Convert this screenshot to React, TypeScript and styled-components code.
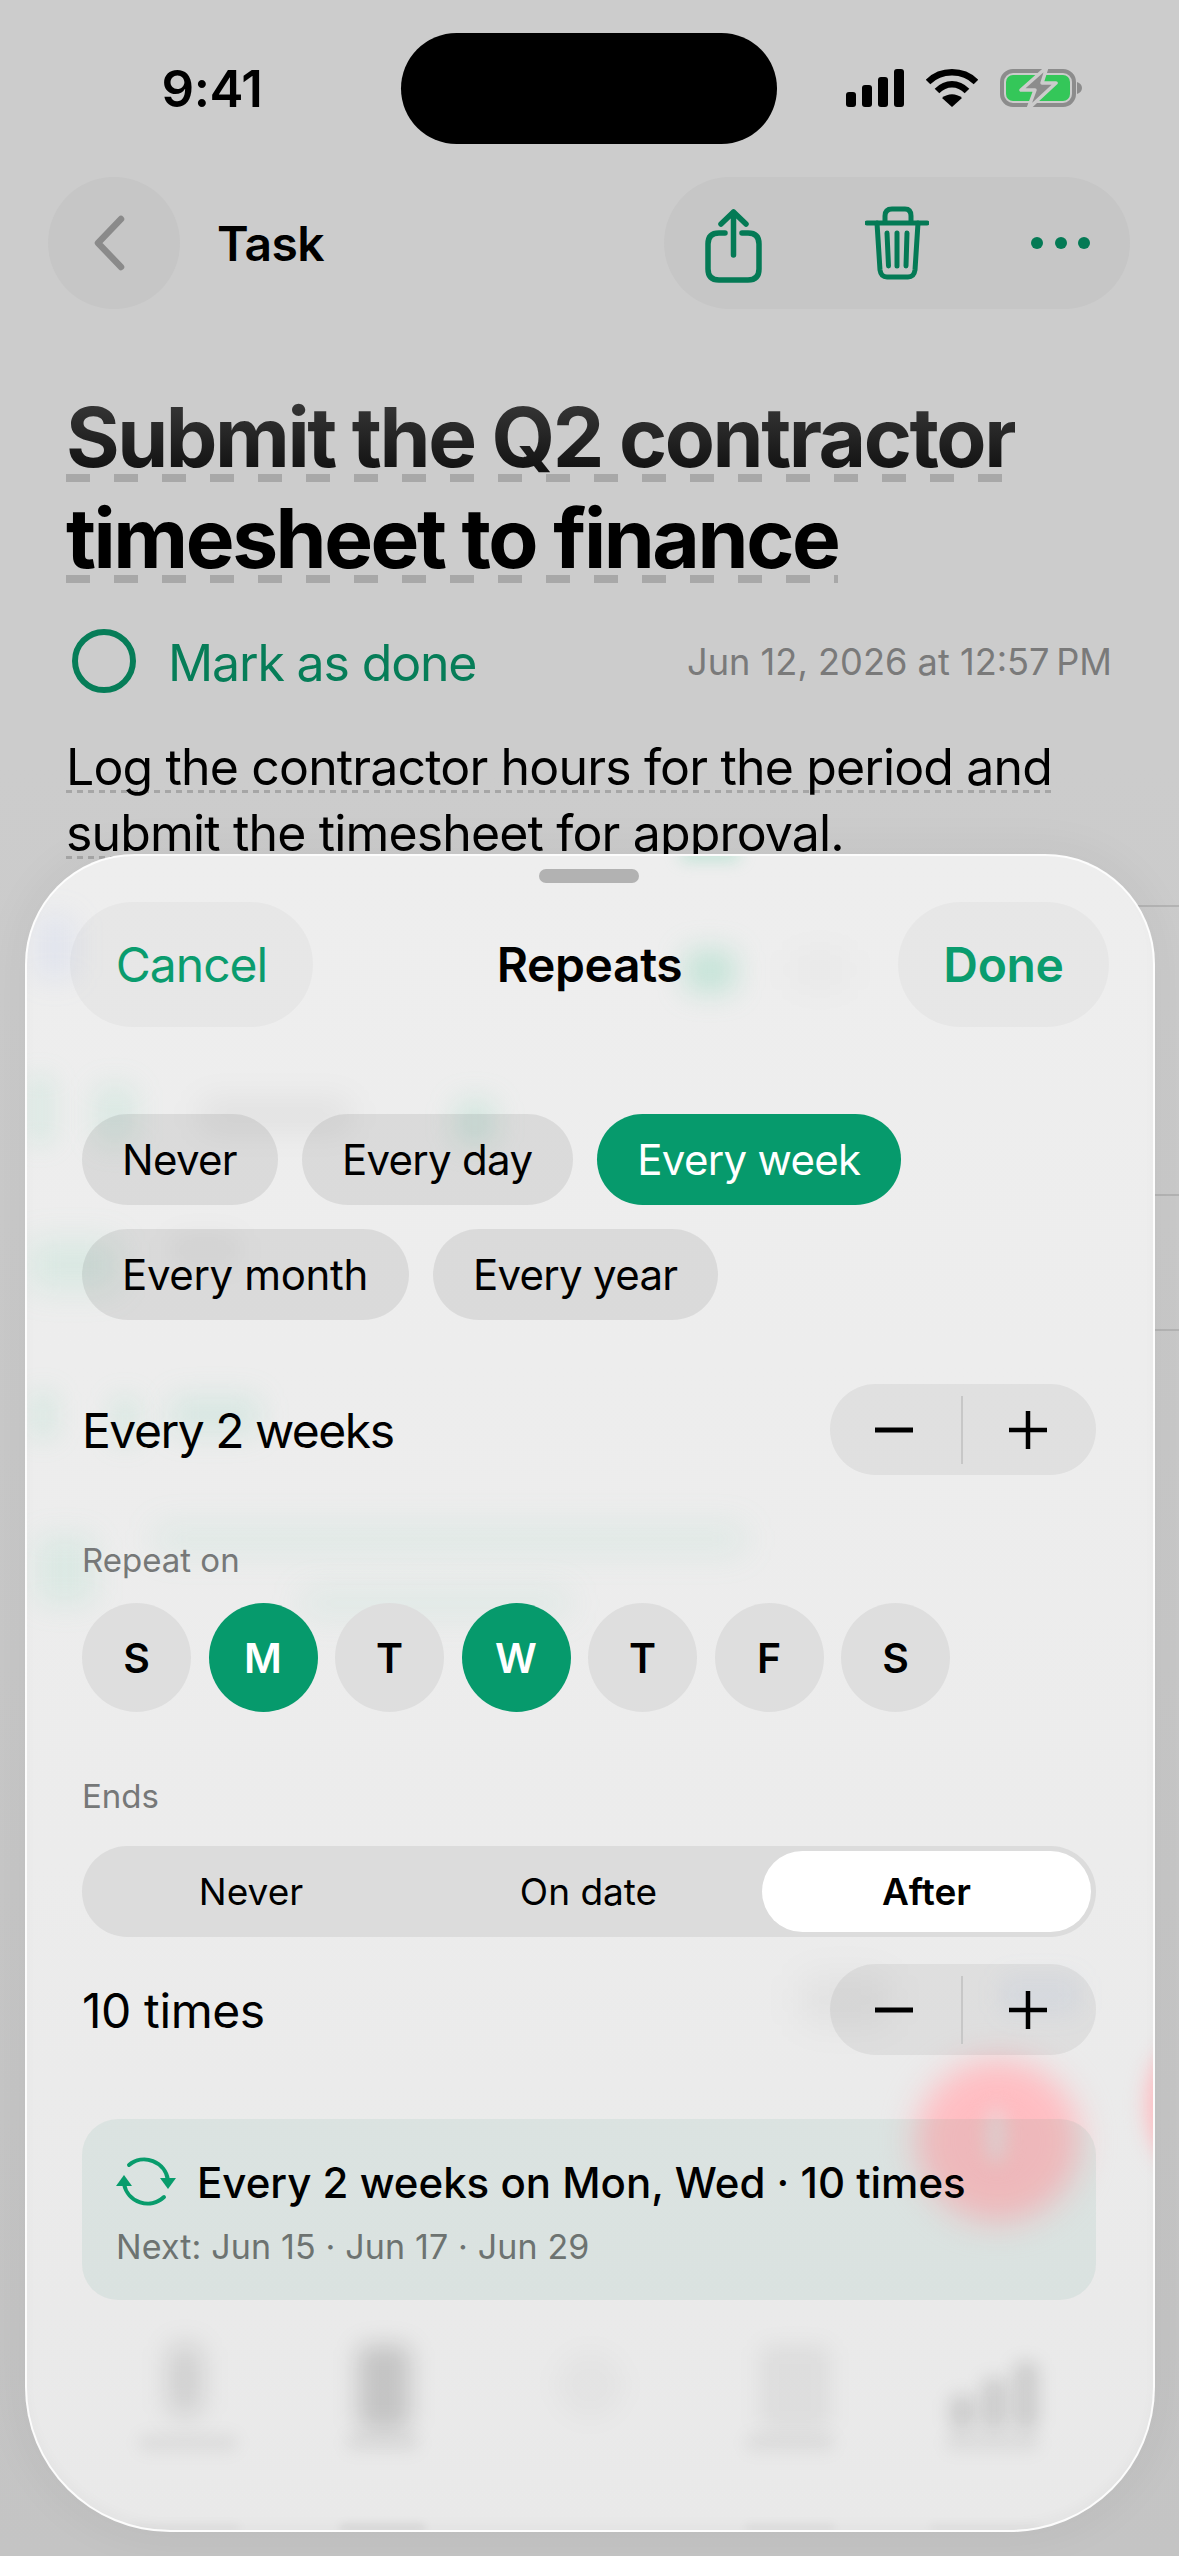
import React from "react";
import styled, { createGlobalStyle } from "styled-components";

const Global = createGlobalStyle`
  html, body { margin: 0; padding: 0; background: #cccccc; }
  * { box-sizing: border-box; }
`;

const Page = styled.div`
  position: relative;
  width: 1179px;
  height: 2556px;
  overflow: hidden;
  background: linear-gradient(#cccccc 0, #cccccc 30%, #c4c4c4 100%);
  font-family: Inter, "Liberation Sans", sans-serif;
  color: #000;
`;

const StatusBar = styled.div`
  display: flex;
  align-items: center;
  height: 111px;
  margin-top: 33px;
`;
const Clock = styled.div`
  width: 401px;
  padding-left: 23px;
  text-align: center;
  font-size: 51px;
  font-weight: 600;
  letter-spacing: -0.5px;
`;
const Island = styled.div`
  width: 376px;
  height: 111px;
  border-radius: 56px;
  background: #000;
`;
const StatusIcons = styled.div`
  display: flex;
  align-items: center;
  margin-left: 69px;
  margin-top: -1px;
  gap: 22px;
`;

const Nav = styled.div`
  display: flex;
  align-items: center;
  height: 132px;
  margin-top: 33px;
  padding: 0 49px 0 48px;
`;
const BackButton = styled.div`
  width: 132px;
  height: 132px;
  border-radius: 50%;
  background: #c6c6c6;
  display: flex;
  align-items: center;
  justify-content: center;
  padding-right: 10px;
`;
const NavTitle = styled.div`
  margin-left: 37px;
  font-size: 48px;
  font-weight: 600;
  letter-spacing: -0.6px;
`;
const Actions = styled.div`
  margin-left: auto;
  width: 466px;
  height: 132px;
  border-radius: 66px;
  background: #c6c6c6;
  display: flex;
  align-items: center;
  padding: 0 39px 0 41px;
  justify-content: space-between;
`;
const ShareSlot = styled.div`
  display: flex;
  margin-top: 5px;
`;

const Content = styled.div`
  padding: 0 66px;
`;
const Title = styled.h1`
  margin: 78px 0 0;
  font-size: 82px;
  line-height: 101px;
  font-weight: 700;
  letter-spacing: -2.45px;
`;
const TitleDash = styled.span`
  background-image: linear-gradient(90deg, #a8a8a8 24px, transparent 24px);
  background-size: 48px 8px;
  background-repeat: repeat-x;
  background-position: 0 calc(100% - 5px);
  -webkit-box-decoration-break: clone;
  box-decoration-break: clone;
`;
const TitleFade = styled.span`
  background-image: linear-gradient(#3a3a3a 395px, #000 505px);
  background-attachment: fixed;
  -webkit-background-clip: text;
  background-clip: text;
  color: transparent;
`;
const MarkRow = styled.div`
  display: flex;
  align-items: center;
  height: 64px;
  margin-top: 40px;
  padding-left: 6px;
`;
const MarkCircle = styled.div`
  width: 64px;
  height: 64px;
  border-radius: 50%;
  border: 6px solid #067d58;
`;
const MarkText = styled.div`
  margin-left: 32px;
  padding-top: 3px;
  font-size: 50px;
  letter-spacing: -1.15px;
  color: #067d58;
`;
const DateText = styled.div`
  margin-left: auto;
  margin-right: 1px;
  padding-top: 1px;
  font-size: 36.2px;
  color: #7a7a7a;
`;
const Description = styled.p`
  margin: 41px 0 0;
  font-size: 50px;
  letter-spacing: -0.85px;
  line-height: 66px;
`;
const DescDash = styled.span`
  background-image: linear-gradient(90deg, #a6a6a6 6px, transparent 6px);
  background-size: 11px 3px;
  background-repeat: repeat-x;
  background-position: 0 calc(100% - 4px);
  -webkit-box-decoration-break: clone;
  box-decoration-break: clone;
`;
const BackList = styled.div`
  margin: 39px 0 0 100px;
`;
const BackRow = styled.div<{ $h: number }>`
  height: ${(p) => p.$h}px;
  border-top: 2px solid #b4b4b4;
`;

/* ---------- sheet ---------- */
const Sheet = styled.div`
  position: absolute;
  left: 25px;
  top: 854px;
  width: 1130px;
  height: 1678px;
  border-radius: 110px 110px 145px 145px;
  background: linear-gradient(#eeeeee, #ececec 60%, #e9e9e9);
  border: 2px solid rgba(255, 255, 255, 0.85);
  box-shadow: 0 0 50px rgba(0, 0, 0, 0.06), inset 0 -7px 12px rgba(0, 0, 0, 0.025);
  overflow: hidden;
  padding: 0 57px 0 55px;
`;
const Smudges = styled.div`
  position: absolute;
  inset: 0;
`;
const Smudge = styled.div<{
  $x: number;
  $y: number;
  $w: number;
  $h: number;
  $c: string;
  $b: number;
  $round?: boolean;
}>`
  position: absolute;
  left: ${(p) => p.$x - 27}px;
  top: ${(p) => p.$y - 856}px;
  width: ${(p) => p.$w}px;
  height: ${(p) => p.$h}px;
  background: ${(p) => p.$c};
  filter: blur(${(p) => p.$b}px);
  border-radius: ${(p) => (p.$round ? "50%" : "8px")};
`;
const SheetBody = styled.div`
  position: relative;
`;
const Handle = styled.div`
  width: 100px;
  height: 14px;
  margin: 13px auto 0;
  border-radius: 7px;
  background: #b2b2b2;
`;
const SheetHeader = styled.div`
  display: grid;
  grid-template-columns: 1fr auto 1fr;
  align-items: center;
  height: 125px;
  margin: 19px -13px 0 -12px;
`;
const HeaderButton = styled.div<{ $w: number; $bold?: boolean }>`
  justify-self: ${(p) => (p.$bold ? "end" : "start")};
  width: ${(p) => p.$w}px;
  height: 125px;
  border-radius: 62px;
  background: rgba(0, 0, 0, 0.028);
  display: flex;
  align-items: center;
  justify-content: center;
  font-size: 48px;
  letter-spacing: ${(p) => (p.$bold ? "-0.3px" : "-1px")};
  font-weight: ${(p) => (p.$bold ? 600 : 400)};
  color: #0a9c6e;
`;
const SheetTitle = styled.div`
  font-size: 48px;
  font-weight: 600;
  letter-spacing: -0.4px;
`;
const Chips = styled.div`
  display: flex;
  flex-wrap: wrap;
  gap: 24px;
  margin-top: 87px;
  width: 900px;
`;
const Chip = styled.div<{ $on?: boolean; $ls?: number }>`
  height: 91px;
  padding: 0 41px 0 40px;
  border-radius: 46px;
  display: flex;
  align-items: center;
  font-size: 42px;
  letter-spacing: ${(p) => p.$ls ?? -0.7}px;
  color: ${(p) => (p.$on ? "#fff" : "#000")};
  background: ${(p) => (p.$on ? "#069a6c" : "rgba(0,0,0,0.08)")};
`;
const StepRow = styled.div<{ $mt: number }>`
  display: flex;
  align-items: center;
  justify-content: space-between;
  height: 91px;
  margin-top: ${(p) => p.$mt}px;
`;
const StepLabel = styled.div<{ $ls: number }>`
  font-size: 48px;
  letter-spacing: ${(p) => p.$ls}px;
  padding-top: 2px;
`;
const Stepper = styled.div`
  position: relative;
  width: 266px;
  height: 91px;
  border-radius: 46px;
  background: rgba(0, 0, 0, 0.055);
  display: flex;
  align-items: center;
  justify-content: space-between;
  padding: 0 49px 0 45px;
`;
const StepDivider = styled.div`
  position: absolute;
  left: 131px;
  top: 12px;
  width: 2px;
  height: 68px;
  background: #c7c7c7;
`;
const SmallLabel = styled.div<{ $mt: number }>`
  margin-top: ${(p) => p.$mt}px;
  height: 40px;
  line-height: 40px;
  font-size: 33px;
  color: #767878;
`;
const Days = styled.div`
  display: flex;
  gap: 17.5px;
  margin-top: 23px;
`;
const Day = styled.div<{ $on?: boolean }>`
  width: 109px;
  height: 109px;
  border-radius: 50%;
  display: flex;
  align-items: center;
  justify-content: center;
  font-size: 41px;
  font-weight: 600;
  color: ${(p) => (p.$on ? "#fff" : "#000")};
  background: ${(p) => (p.$on ? "#069a6c" : "#dedede")};
`;
const Segments = styled.div`
  display: grid;
  grid-template-columns: 328px 347px 1fr;
  height: 91px;
  margin-top: 30px;
  padding: 5px;
  border-radius: 46px;
  background: #dcdcdc;
`;
const Segment = styled.div<{ $on?: boolean }>`
  display: flex;
  align-items: center;
  justify-content: center;
  font-size: 37px;
  font-weight: ${(p) => (p.$on ? 600 : 400)};
  border-radius: 41px;
  background: ${(p) => (p.$on ? "#fff" : "transparent")};
`;
const Summary = styled.div`
  height: 181px;
  margin-top: 64px;
  padding: 35px 34px 0;
  border-radius: 36px;
  background: rgba(6, 120, 85, 0.068);
`;
const SummaryTop = styled.div`
  display: flex;
  align-items: center;
  gap: 21px;
  height: 56px;
`;
const SummaryTitle = styled.div`
  font-size: 42px;
  font-weight: 500;
`;
const SummaryNext = styled.div`
  margin-top: 16px;
  font-size: 34px;
  letter-spacing: 0.15px;
  color: #6d7371;
`;

const Battery = () => (
  <svg width="84" height="40" viewBox="0 0 84 40">
    <rect x="2" y="3" width="72" height="34" rx="11" fill="none" stroke="#8c8c8c" strokeWidth="4" />
    <rect x="6" y="7" width="64" height="26" rx="7" fill="#34c759" />
    <path d="M77 14c3 1 5 3 5 6s-2 5-5 6z" fill="#8c8c8c" />
    <path d="M47 -1 21 22h14l-7 19 28-26H42z" fill="#8c8c8c" stroke="#cccccc" strokeWidth="3.500" strokeLinejoin="round" />
  </svg>
);

const Share = () => (
  <svg width="57" height="74" viewBox="0 0 57 74" fill="none" stroke="#047a55" strokeWidth="5.500" strokeLinecap="round" strokeLinejoin="round">
    <path d="M20 24H14Q3 24 3 35V60Q3 71 14 71H43Q54 71 54 60V35Q54 24 43 24H37" />
    <path d="M28.500 46V3M16 15 28.500 3 41 15" />
  </svg>
);

const Trash = () => (
  <svg width="64" height="74" viewBox="0 0 64 74" fill="none" stroke="#047a55" strokeWidth="5" strokeLinecap="round" strokeLinejoin="round">
    <path d="M2 17H62" />
    <path d="M20 16V10Q20 3 27 3H40Q46 3 46 10V16" />
    <path d="M12 17 15 64Q16 71 22 71H43Q49 71 50 64L53 17" />
    <path d="M22 27 23.500 60M32 27V60M42 27 41 60" />
  </svg>
);

const Minus = () => (
  <svg width="38" height="38" viewBox="0 0 38 38"><path d="M0 19H38" stroke="#000" strokeWidth="5" strokeLinecap="round" /></svg>
);
const Plus = () => (
  <svg width="38" height="38" viewBox="0 0 38 38"><path d="M0 19H38M19 0V38" stroke="#000" strokeWidth="4.500" strokeLinecap="round" /></svg>
);

const StepControl = () => (
  <Stepper>
    <Minus />
    <StepDivider />
    <Plus />
  </Stepper>
);

const green = (a: number) => `rgba(120,210,175,${a})`;
const grey = (a: number) => `rgba(0,0,0,${a})`;

const smudges = [
  { x: 680, y: 848, w: 60, h: 12, c: green(0.45), b: 8 },
  { x: 685, y: 950, w: 50, h: 42, c: green(0.35), b: 14 },
  { x: 790, y: 950, w: 60, h: 40, c: grey(0.02), b: 16 },
  { x: 35, y: 915, w: 40, h: 65, c: "rgba(150,170,240,.13)", b: 14 },
  { x: 25, y: 1075, w: 30, h: 70, c: green(0.14), b: 12 },
  { x: 95, y: 1085, w: 40, h: 60, c: green(0.16), b: 14 },
  { x: 200, y: 1100, w: 150, h: 30, c: grey(0.055), b: 16 },
  { x: 455, y: 1100, w: 40, h: 45, c: green(0.22), b: 14 },
  { x: 28, y: 1240, w: 90, h: 50, c: green(0.16), b: 16 },
  { x: 170, y: 1235, w: 70, h: 30, c: grey(0.04), b: 14 },
  { x: 28, y: 1390, w: 30, h: 50, c: green(0.14), b: 12 },
  { x: 110, y: 1395, w: 30, h: 50, c: green(0.14), b: 12 },
  { x: 170, y: 1395, w: 90, h: 40, c: green(0.17), b: 14 },
  { x: 155, y: 1525, w: 590, h: 28, c: green(0.13), b: 16 },
  { x: 300, y: 1590, w: 270, h: 26, c: green(0.13), b: 16 },
  { x: 35, y: 1535, w: 60, h: 70, c: green(0.14), b: 14 },
  { x: 170, y: 2345, w: 30, h: 70, c: grey(0.13), b: 14 },
  { x: 358, y: 2345, w: 52, h: 85, c: grey(0.16), b: 12 },
  { x: 555, y: 2350, w: 70, h: 70, c: grey(0.025), b: 12, round: true },
  { x: 760, y: 2345, w: 70, h: 85, c: grey(0.05), b: 11 },
  { x: 950, y: 2395, w: 24, h: 35, c: grey(0.13), b: 9 },
  { x: 982, y: 2378, w: 24, h: 52, c: grey(0.13), b: 9 },
  { x: 1014, y: 2362, w: 24, h: 68, c: grey(0.13), b: 9 },
  { x: 138, y: 2434, w: 100, h: 18, c: grey(0.05), b: 8 },
  { x: 345, y: 2434, w: 75, h: 18, c: grey(0.05), b: 8 },
  { x: 745, y: 2434, w: 90, h: 18, c: grey(0.05), b: 8 },
  { x: 945, y: 2434, w: 95, h: 18, c: grey(0.05), b: 8 },
  { x: 130, y: 2524, w: 110, h: 8, c: grey(0.035), b: 4 },
  { x: 340, y: 2524, w: 85, h: 8, c: grey(0.07), b: 4 },
  { x: 745, y: 2524, w: 90, h: 8, c: grey(0.045), b: 4 },
  { x: 930, y: 2524, w: 110, h: 8, c: grey(0.03), b: 4 },
  { x: 800, y: 1975, w: 90, h: 50, c: grey(0.04), b: 18 },
  { x: 1000, y: 1975, w: 80, h: 40, c: "rgba(120,150,230,.07)", b: 12 },
  { x: 916, y: 2060, w: 164, h: 162, c: "#ffbdc2", b: 16, round: true },
  { x: 985, y: 2105, w: 22, h: 60, c: "rgba(226,226,226,.55)", b: 9, round: true },
  { x: 1146, y: 2040, w: 80, h: 130, c: "#ffbdc2", b: 10, round: true },
];

export default function App() {
  return (
    <Page>
      <Global />
      <StatusBar>
        <Clock>9:41</Clock>
        <Island />
        <StatusIcons>
          <svg width="58" height="38" viewBox="0 0 58 38" fill="#000">
            <rect x="0" y="23" width="10" height="15" rx="3" />
            <rect x="16" y="16" width="10" height="22" rx="3" />
            <rect x="32" y="8" width="10" height="30" rx="3" />
            <rect x="48" y="0" width="10" height="38" rx="3" />
          </svg>
          <svg width="52" height="38" viewBox="0 0 52 38" fill="none" stroke="#000" strokeWidth="6.500">
            <path d="M2 13C15 0 37 0 50 13" />
            <path d="M11 22C20 13 32 13 41 22" />
            <path d="M26 38 16 29C22 24 30 24 36 29Z" fill="#000" stroke="none" />
          </svg>
          <Battery />
        </StatusIcons>
      </StatusBar>

      <Nav>
        <BackButton>
          <svg width="34" height="56" viewBox="0 0 34 56" fill="none" stroke="#8a8a8a" strokeWidth="6.500" strokeLinecap="round" strokeLinejoin="round">
            <path d="M29 4 6 28 29 52" />
          </svg>
        </BackButton>
        <NavTitle>Task</NavTitle>
        <Actions>
          <ShareSlot>
            <Share />
          </ShareSlot>
          <Trash />
          <svg width="60" height="12" viewBox="0 0 60 12" fill="#047a55">
            <circle cx="6" cy="6" r="6" />
            <circle cx="30" cy="6" r="6" />
            <circle cx="53" cy="6" r="6" />
          </svg>
        </Actions>
      </Nav>

      <Content>
        <Title>
          <TitleDash>
            <TitleFade>Submit the Q2 contractor timesheet to finance</TitleFade>
          </TitleDash>
        </Title>
        <MarkRow>
          <MarkCircle />
          <MarkText>Mark as done</MarkText>
          <DateText>Jun 12, 2026 at 12:57{"\u2009"}PM</DateText>
        </MarkRow>
        <Description>
          <DescDash>Log the contractor hours for the period and submit the timesheet for approval.</DescDash>
        </Description>
      </Content>
      <BackList>
        <BackRow $h={289} />
        <BackRow $h={135} />
        <BackRow $h={135} />
      </BackList>

      <Sheet>
        <Smudges>
          {smudges.map((s, i) => (
            <Smudge key={i} $x={s.x} $y={s.y} $w={s.w} $h={s.h} $c={s.c} $b={s.b} $round={s.round} />
          ))}
        </Smudges>
        <SheetBody>
          <Handle />
          <SheetHeader>
            <HeaderButton $w={243}>Cancel</HeaderButton>
            <SheetTitle>Repeats</SheetTitle>
            <HeaderButton $w={211} $bold>Done</HeaderButton>
          </SheetHeader>
          <Chips>
            <Chip>Never</Chip>
            <Chip>Every day</Chip>
            <Chip $on>Every week</Chip>
            <Chip $ls={-0.35}>Every month</Chip>
            <Chip>Every year</Chip>
          </Chips>
          <StepRow $mt={64}>
            <StepLabel $ls={-1.5}>Every 2 weeks</StepLabel>
            <StepControl />
          </StepRow>
          <SmallLabel $mt={65}>Repeat on</SmallLabel>
          <Days>
            <Day>S</Day>
            <Day $on>M</Day>
            <Day>T</Day>
            <Day $on>W</Day>
            <Day>T</Day>
            <Day>F</Day>
            <Day>S</Day>
          </Days>
          <SmallLabel $mt={64}>Ends</SmallLabel>
          <Segments>
            <Segment>Never</Segment>
            <Segment>On date</Segment>
            <Segment $on>After</Segment>
          </Segments>
          <StepRow $mt={27}>
            <StepLabel $ls={-0.4}>10 times</StepLabel>
            <StepControl />
          </StepRow>
          <Summary>
            <SummaryTop>
              <svg width="60" height="60" viewBox="0 0 60 60" fill="none" stroke="#089c6c" strokeWidth="4" strokeLinecap="round">
                <path d="M13 13A24 24 0 0 1 52 28" />
                <path d="M48 45A24 24 0 0 1 8 32" />
                <path d="M44 26H60L52 37Z" fill="#089c6c" stroke="none" />
                <path d="M0 34H16L8 23Z" fill="#089c6c" stroke="none" />
              </svg>
              <SummaryTitle>Every 2 weeks on Mon, Wed · 10 times</SummaryTitle>
            </SummaryTop>
            <SummaryNext>Next: Jun 15 · Jun 17 · Jun 29</SummaryNext>
          </Summary>
        </SheetBody>
      </Sheet>
    </Page>
  );
}
